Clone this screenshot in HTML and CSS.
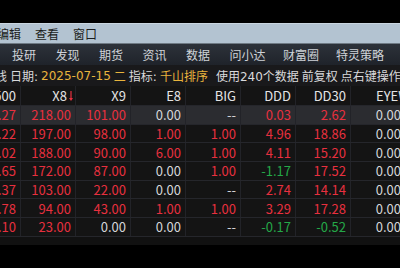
FILE: index.html
```html
<!DOCTYPE html>
<html lang="zh-CN">
<head>
<meta charset="utf-8">
<link rel="stylesheet" href="styles.css">
</head>
<body>
<div class="app">
  <div class="topblack"></div>
  <div class="menubar">
    <span class="mi cut">文件编辑</span>
    <span class="mi">查看</span>
    <span class="mi">窗口</span>
  </div>
  <div class="navbar">
    <span class="ni">投研</span>
    <span class="ni">发现</span>
    <span class="ni">期货</span>
    <span class="ni">资讯</span>
    <span class="ni">数据</span>
    <span class="ni">问小达</span>
    <span class="ni n7">财富圈</span>
    <span class="ni n8">特灵策略</span>
  </div>
  <div class="infoline">
    <span class="cutinfo">日线</span>
    <span>日期:</span>
    <span class="gold">2025-07-15</span>
    <span class="gold">二</span>
    <span>指标:</span>
    <span class="gold">千山排序</span>
    <span class="wide">使用240个数据</span>
    <span>前复权</span>
    <span>点右键操作</span>
  </div>
  <div class="grid">
    <div class="row head">
      <div class="c">1500</div>
      <div class="c">X8<svg class="arrow" width="4" height="10" viewBox="0 0 4 10"><path d="M1.4 0h1.2v7H4L2 10 0 7h1.4z" fill="#e8303f"/></svg></div>
      <div class="c">X9</div>
      <div class="c">E8</div>
      <div class="c">BIG</div>
      <div class="c">DDD</div>
      <div class="c">DD30</div>
      <div class="c last">EYEW</div>
    </div>
    <div class="row sel">
      <div class="c r">3.27</div><div class="c r">218.00</div><div class="c r">101.00</div><div class="c w">0.00</div><div class="c w">--</div><div class="c r">0.03</div><div class="c r">2.62</div><div class="c w">0.00</div>
    </div>
    <div class="row">
      <div class="c r">3.22</div><div class="c r">197.00</div><div class="c r">98.00</div><div class="c r">1.00</div><div class="c r">1.00</div><div class="c r">4.96</div><div class="c r">18.86</div><div class="c w">0.00</div>
    </div>
    <div class="row">
      <div class="c r">3.02</div><div class="c r">188.00</div><div class="c r">90.00</div><div class="c r">6.00</div><div class="c r">1.00</div><div class="c r">4.11</div><div class="c r">15.20</div><div class="c w">0.00</div>
    </div>
    <div class="row">
      <div class="c r">2.65</div><div class="c r">172.00</div><div class="c r">87.00</div><div class="c w">0.00</div><div class="c r">1.00</div><div class="c g">-1.17</div><div class="c r">17.52</div><div class="c w">0.00</div>
    </div>
    <div class="row">
      <div class="c r">2.37</div><div class="c r">103.00</div><div class="c r">22.00</div><div class="c w">0.00</div><div class="c w">--</div><div class="c r">2.74</div><div class="c r">14.14</div><div class="c w">0.00</div>
    </div>
    <div class="row">
      <div class="c r">1.78</div><div class="c r">94.00</div><div class="c r">43.00</div><div class="c r">1.00</div><div class="c r">1.00</div><div class="c r">3.29</div><div class="c r">17.28</div><div class="c w">0.00</div>
    </div>
    <div class="row">
      <div class="c r">1.10</div><div class="c r">23.00</div><div class="c w">0.00</div><div class="c w">0.00</div><div class="c w">--</div><div class="c g">-0.17</div><div class="c g">-0.52</div><div class="c w">0.00</div>
    </div>
  </div>
  <div class="tail"></div>
</div>
</body>
</html>
```

FILE: styles.css
```css
html, body {
  margin: 0;
  padding: 0;
  background: #000;
  overflow: hidden;
}
body {
  width: 400px;
  height: 268px;
  font-family: "Noto Sans CJK SC", "Noto Sans", sans-serif;
}
.app {
  width: 400px;
  overflow: hidden;
}
.topblack {
  height: 23px;
  background: #000;
}
.menubar {
  height: 19px;
  background: #b3c3d1;
  border-top: 1px solid #c9d5df;
  border-bottom: 1px solid #6f7a84;
  display: flex;
  align-items: center;
  gap: 14px;
  font-size: 12px;
  color: #1b1d20;
  white-space: nowrap;
}
.mi.cut {
  margin-left: -27px;
}
.navbar {
  height: 21px;
  background: linear-gradient(#2d323a, #1f232a);
  display: flex;
  align-items: center;
  gap: 19.5px;
  padding-left: 12px;
  font-size: 12px;
  color: #cfd3d8;
  white-space: nowrap;
}
.ni.n7 { margin-left: -2px; }
.ni.n8 { margin-left: -2.5px; }
.infoline {
  height: 21px;
  background: #19191b;
  display: flex;
  align-items: center;
  gap: 3px;
  font-family: "DejaVu Sans", "Noto Sans CJK SC", sans-serif;
  font-size: 12px;
  color: #d9dadc;
  white-space: nowrap;
}
.cutinfo {
  margin-left: -17px;
}
.wide {
  margin-left: 5px;
}
.gold {
  color: #e9b43d;
}
.grid {
  background: #141414;
  margin-left: -34px;
}
.row {
  display: grid;
  grid-template-columns: repeat(8, 55px);
  height: 18.7px;
  border-bottom: 1px solid #25262b;
  box-sizing: border-box;
}
.row.head {
  height: 20px;
  color: #e4e4e4;
}
.row.sel {
  background: #2b2c30;
}
.c {
  display: flex;
  align-items: center;
  justify-content: flex-end;
  padding-right: 4px;
  border-right: 1px solid #222328;
  font-size: 13px;
  white-space: nowrap;
  overflow: hidden;
}
.c.last {
  justify-content: flex-start;
  padding-left: 25px;
  padding-right: 0;
}
.arrow {
  margin-left: 2px;
  margin-right: -2px;
}
.r { color: #e8303f; }
.g { color: #24a848; }
.w { color: #d4d6d8; }
.tail {
  height: 8px;
  background: #111;
}
```
